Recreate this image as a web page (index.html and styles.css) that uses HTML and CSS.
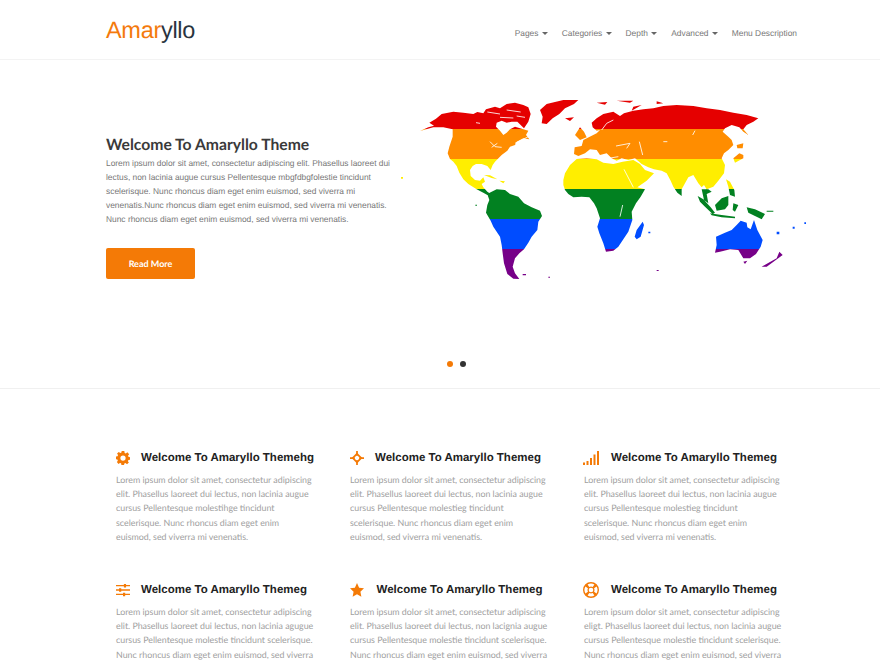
FILE: index.html
```html
<html>
    <head>
        <meta charset="utf-8">
        <title>Amaryllo</title>
        <link rel="stylesheet" href="styles.css">
    </head>
    <body>
        <header class="topo">
            <a class="logo"><span class="logo-cor">Amar</span>yllo</a>
            <ul class="menu">
                <li>Pages <i class="seta"></i></li>
                <li>Categories <i class="seta"></i></li>
                <li>Depth <i class="seta"></i></li>
                <li>Advanced <i class="seta"></i></li>
                <li>Menu Description</li>
            </ul>
        </header>
        <section class="hero">
            <div class="hero-conteudo">
                <div class="hero-texto">
                    <h1>Welcome To Amaryllo Theme</h1>
                    <p>Lorem ipsum dolor sit amet, consectetur adipiscing elit. Phasellus laoreet dui<br>lectus, non lacinia augue cursus Pellentesque mbgfdbgfolestie tincidunt<br>scelerisque. Nunc rhoncus diam eget enim euismod, sed viverra mi<br>venenatis.Nunc rhoncus diam eget enim euismod, sed viverra mi venenatis.<br>Nunc rhoncus diam eget enim euismod, sed viverra mi venenatis.</p>
                    <a class="botao">Read More</a>
                </div>
                <!-- mapa em listras -->
                <svg class="mapa" viewBox="0 0 1260 600" width="420" height="200">
                    <defs>
                        <clipPath id="terra">
                            <path d="M60 123L85 112 102 107 88 98 108 86 125 72 160 65 190 68 220 72 232 66 250 70 258 58 285 50 300 55 320 42 345 38 370 45 385 52 392 72 385 95 372 115 352 95 335 95 320 98 305 92 290 98 288 110 300 122 310 135 320 128 330 118 345 110 370 118 385 122 378 135 388 148 370 145 350 155 345 165 330 170 322 182 305 195 295 205 285 215 278 225 272 240 262 228 245 222 228 222 218 228 210 240 212 258 225 270 240 272 250 262 255 275 245 282 250 292 262 305 272 312 262 315 250 308 230 298 205 282 190 268 178 248 170 228 160 215 150 207 143 190 148 170 158 140 158 118 130 112 100 112Z"/>
                            <path d="M252 255L270 256 292 268 275 264ZM298 272L315 274 310 280Z"/>
                            <path d="M420 60L440 42 490 30 535 30 522 42 495 55 478 72 458 85 440 102 425 100 428 80Z"/>
                            <path d="M262 312L275 305 290 298 315 300 330 312 355 320 372 340 395 352 420 362 426 378 415 395 412 420 395 440 385 458 372 478 358 490 345 505 338 530 345 550 358 567 340 566 322 552 312 520 308 490 305 465 300 440 280 410 272 392 258 368 262 345 268 330Z"/>
                            <path d="M490 270L495 250 510 225 530 207 560 205 590 208 610 218 640 222 668 215 700 210 720 222 735 240 762 250 740 272 712 292 735 298 722 320 708 340 695 365 697 390 685 425 672 445 655 470 640 482 618 485 610 460 598 430 592 410 600 385 590 355 582 340 568 322 545 320 520 322 505 312 495 300 490 285Z"/>
                            <path d="M728 395L732 405 722 440 710 448 704 440 710 420Z"/>
                            <path d="M522 192L524 172 545 168 550 150 570 140 590 130 600 120 590 122 578 112 575 98 590 85 610 72 640 65 660 78 672 70 700 62 730 58 760 55 790 48 830 45 880 48 920 55 960 60 1000 68 1040 75 1075 85 1060 95 1040 105 1030 118 1045 135 1030 125 1018 112 995 105 975 115 968 125 985 140 995 150 1000 165 985 180 972 190 965 205 975 225 972 250 955 272 940 290 920 298 912 285 905 292 895 280 880 255 865 262 855 280 845 298 845 318 832 308 820 290 812 272 800 250 785 242 762 238 745 232 725 222 705 205 685 210 665 205 650 212 635 205 620 190 600 195 590 180 570 178 555 190 535 198Z"/>
                            <path d="M1000 205L1018 190 1030 195 1030 205 1005 218ZM1010 165L1030 160 1028 175 1012 175ZM978 268L990 275 1003 300 1005 320 990 315 985 290Z"/>
                            <path d="M905 298L925 298 935 305 920 312 925 340 912 330Z"/>
                            <path d="M893 318L910 328 932 352 945 368 938 372 915 350 900 335ZM945 345L965 325 985 318 985 345 975 358 950 362ZM930 370L965 375 1005 380 1005 385 965 382 935 376ZM1000 340L1015 345 1005 365 998 360ZM1040 352L1065 358 1095 372 1085 388 1065 378 1045 368Z"/>
                            <path d="M948 440L975 428 995 420 1010 405 1022 392 1040 398 1042 412 1052 418 1062 390 1072 420 1088 450 1082 470 1068 492 1050 505 1030 505 1015 480 990 478 960 485 945 488 950 465Z"/>
                            <path d="M1030 515L1042 512 1035 522ZM1085 530L1130 505 1138 485 1148 495 1100 530Z"/>
                            <path d="M495 85L522 82 510 93ZM525 135L540 112 552 125 560 142 540 150ZM590 38L622 36 615 44ZM650 32L700 32 690 38ZM700 50L725 45 695 62ZM770 34L790 40 770 42Z"/>
                            <path d="M3 261h6v5H3zM226 344h5v3h-5zM368 552h10v4h-10zM445 560h5v3h-5zM770 540h6v3h-6zM1130 425h8v8h-8zM1178 410h6v6h-6zM1213 397h5v5h-5zM745 425h6v5h-6zM1100 362h20v3h-20z"/>
                        </clipPath>
                    </defs>
                    <g clip-path="url(#terra)">
                        <rect y="0" width="1260" height="117" fill="#e50000"/>
                        <rect y="117" width="1260" height="90" fill="#ff8d00"/>
                        <rect y="207" width="1260" height="90" fill="#ffee00"/>
                        <rect y="297" width="1260" height="90" fill="#028121"/>
                        <rect y="387" width="1260" height="90" fill="#004cff"/>
                        <rect y="477" width="1260" height="123" fill="#770088"/>
                    </g>
                    <!-- mares e lagos -->
                    <g class="mar">
                        <path d="M262 66L300 72M320 60L362 66M300 82L340 84M228 98L240 100M350 78L375 82"/>
                        <path d="M270 155L285 170 305 172M275 172L292 160M345 160L385 140"/>
                        <path d="M672 238L700 292"/>
                        <path d="M590 195L625 205 655 200M648 168L690 160 680 175M718 155L728 195"/>
                        <path d="M605 120L620 100 640 90M885 122L878 135M790 155L802 155"/>
                        <path d="M668 345L660 380"/>
                    </g>
                </svg>
            </div>
            <div class="pontos">
                <span class="ponto ativo"></span>
                <span class="ponto"></span>
            </div>
        </section>
        <section class="recursos">
            <div class="recurso">
                <h3>
                    <svg class="icone" viewBox="0 0 16 16"><path fill-rule="evenodd" d="M6.500 0h3l.4 2.200 1.300.6L13 1.500 15 3.600l-1.300 1.800.5 1.300 2 .4v3l-2 .3-.6 1.400L14.700 13 12.600 15 10.800 13.800l-1.300.5L9.200 16h-3l-.4-1.900-1.300-.5L2.800 14.800 1 12.700l1.100-1.700-.5-1.300L0 9.300v-3l1.800-.4.5-1.300L1.200 2.900 3.200 1l1.700 1.200 1.300-.5zM8 5a3 3 0 1 0 0 6 3 3 0 0 0 0-6z"/></svg>
                    Welcome To Amaryllo Themehg
                </h3>
                <p>Lorem ipsum dolor sit amet, consectetur adipiscing<br>elit. Phasellus laoreet dui lectus, non lacinia augue<br>cursus Pellentesque molestihge tincidunt<br>scelerisque. Nunc rhoncus diam eget enim<br>euismod, sed viverra mi venenatis.</p>
            </div>
            <div class="recurso">
                <h3>
                    <svg class="icone" viewBox="0 0 16 16"><g class="traco"><path d="M8 3.200L12.800 8 8 12.800 3.200 8z"/><path d="M8 0v5.500M8 10.500V16M0 8h5.500M10.500 8H16"/></g></svg>
                    Welcome To Amaryllo Themeg
                </h3>
                <p>Lorem ipsum dolor sit amet, consectetur adipiscing<br>elit. Phasellus laoreet dui lectus, non lacinia augue<br>cursus Pellentesque molestieg tincidunt<br>scelerisque. Nunc rhoncus diam eget enim<br>euismod, sed viverra mi venenatis.</p>
            </div>
            <div class="recurso">
                <h3>
                    <svg class="icone icone-barras" viewBox="0 1 16 14"><path d="M0 12.500h2V15H0zM3.500 11h2v4h-2zM7 8h2v7H7zM10.500 4.500h2V15h-2zM14 1h2v14h-2z"/></svg>
                    Welcome To Amaryllo Themeg
                </h3>
                <p>Lorem ipsum dolor sit amet, consectetur adipiscing<br>elit. Phasellus laoreet dui lectus, non lacinia augue<br>cursus Pellentesque molestieg tincidunt<br>scelerisque. Nunc rhoncus diam eget enim<br>euismod, sed viverra mi venenatis.</p>
            </div>
            <div class="recurso">
                <h3>
                    <svg class="icone" viewBox="0 0 16 16"><path d="M0 2.200h16v1.600H0zM0 7.200h16v1.600H0zM0 12.200h16v1.600H0zM9 1h2.500v4H9zM3.500 6h2.500v4H3.500zM8 11h2.500v4H8z"/></svg>
                    Welcome To Amaryllo Themeg
                </h3>
                <p>Lorem ipsum dolor sit amet, consectetur adipiscing<br>elit. Phasellus laoreet dui lectus, non lacinia agugue<br>cursus Pellentesque molestie tincidunt scelerisque.<br>Nunc rhoncus diam eget enim euismod, sed viverra</p>
            </div>
            <div class="recurso">
                <h3 class="gap-maior">
                    <svg class="icone" viewBox="0 0 16 16"><path d="M8 0l2.400 5.300 5.600.7-4.100 3.900 1.100 5.800L8 12.900 3 15.700l1.100-5.800L0 6l5.600-.7z"/></svg>
                    Welcome To Amaryllo Themeg
                </h3>
                <p>Lorem ipsum dolor sit amet, consectetur adipiscing<br>elit. Phasellus laoreet dui lectus, non lacignia augue<br>cursus Pellentesque molestie tincidunt scelerisque.<br>Nunc rhoncus diam eget enim euismod, sed viverra</p>
            </div>
            <div class="recurso">
                <h3>
                    <svg class="icone icone-largo" viewBox="0 0 16 16"><path fill-rule="evenodd" d="M8 0a8 8 0 1 0 0 16A8 8 0 0 0 8 0zm0 1.500a6.500 6.500 0 0 1 3.400.95L9.700 4.900a3.400 3.400 0 0 0-3.400 0L4.600 2.450A6.500 6.500 0 0 1 8 1.500zM2.450 4.600L4.900 6.300a3.400 3.400 0 0 0 0 3.400L2.450 11.400a6.500 6.500 0 0 1 0-6.800zm11.100 0a6.500 6.500 0 0 1 0 6.800L11.100 9.700a3.400 3.400 0 0 0 0-3.400zM6.300 11.100a3.400 3.400 0 0 0 3.400 0l1.700 2.450a6.500 6.500 0 0 1-6.800 0zM8 5.700a2.300 2.300 0 1 0 0 4.600 2.300 2.300 0 0 0 0-4.600z"/></svg>
                    Welcome To Amaryllo Themeg
                </h3>
                <p>Lorem ipsum dolor sit amet, consectetur adipiscing<br>eligt. Phasellus laoreet dui lectus, non lacinia augue<br>cursus Pellentesque molestie tincidunt scelerisque.<br>Nunc rhoncus diam eget enim euismod, sed viverra</p>
            </div>
        </section>
    </body>
</html>
```
FILE: styles.css
```css
*{
    box-sizing: border-box;
}
html, body{
    height: 660px;
    overflow: hidden;
}
body{
    margin: 0;
    background-color: #fff;
    font-family: "Liberation Sans", Arial, sans-serif;
    text-rendering: geometricPrecision;
}
.topo{
    display: flex;
    align-items: center;
    justify-content: space-between;
    height: 60px;
    padding: 0 83px 0 106px;
    border-bottom: 1px solid #f3f3f3;
}
.logo{
    font-size: 23.500px;
    letter-spacing: -0.3px;
    color: #2a3440;
    margin-top: 1px;
}
.logo-cor{
    color: #f47a0c;
}
.menu{
    display: flex;
    gap: 14px;
    list-style: none;
    margin: 7px 0 0 0;
    padding: 0;
    font-size: 8.400px;
    color: #777;
}
.seta{
    display: inline-block;
    width: 0;
    height: 0;
    margin-left: 1px;
    vertical-align: middle;
    border-top: 3px solid #666;
    border-left: 3px solid transparent;
    border-right: 3px solid transparent;
}
.hero{
    height: 329px;
    border-bottom: 1px solid #f0f0f0;
}
.hero-conteudo{
    display: flex;
    height: 287px;
    padding: 30px 0 0 106px;
}
.hero-texto{
    width: 294px;
    padding-top: 46px;
}
.hero-texto h1{
    margin: 0;
    font-family: "Lato", sans-serif;
    font-size: 15.700px;
    line-height: 18px;
    font-weight: 700;
    color: #3a3a3a;
}
.hero-texto p{
    margin: 2px 0 0 0;
    font-size: 8.400px;
    line-height: 14px;
    color: #777;
    white-space: nowrap;
}
.botao{
    display: flex;
    align-items: center;
    justify-content: center;
    width: 89px;
    height: 31px;
    margin-top: 22px;
    border-radius: 2px;
    background-color: #f47a06;
    color: #fff;
    font-family: "Lato", sans-serif;
    font-size: 9px;
    font-weight: 700;
}
.mapa{
    display: block;
    flex-shrink: 0;
}
.mar path{
    fill: none;
    stroke: #fff;
    stroke-width: 2.500;
}
.pontos{
    display: flex;
    justify-content: center;
    gap: 7px;
    padding-left: 32px;
    padding-top: 14px;
}
.ponto{
    width: 6px;
    height: 6px;
    border-radius: 50%;
    background-color: #333;
}
.ponto.ativo{
    background-color: #f47a06;
}
.recursos{
    display: grid;
    grid-template-columns: repeat(3, 234px);
    grid-auto-rows: 132px;
    padding: 60px 0 0 116px;
}
.recurso h3{
    display: flex;
    align-items: center;
    gap: 11px;
    height: 18px;
    margin: 0 0 6px 0;
    font-size: 11.500px;
    font-weight: 700;
    color: #222;
    white-space: nowrap;
}
.recurso h3.gap-maior{
    gap: 12.500px;
}
.icone{
    width: 14px;
    height: 14px;
    flex-shrink: 0;
    fill: #f47a06;
}
.icone-largo{
    width: 16px;
    height: 16px;
    margin-left: -1px;
    margin-right: 1px;
}
.icone-barras{
    width: 16px;
    margin-left: -1px;
    margin-right: 1px;
}
.traco{
    fill: none;
    stroke: #f47a06;
    stroke-width: 2;
}
.recurso p{
    margin: 0;
    font-family: "Lato", sans-serif;
    font-size: 8.850px;
    line-height: 14.200px;
    color: #a0a0a0;
    white-space: nowrap;
}
```
